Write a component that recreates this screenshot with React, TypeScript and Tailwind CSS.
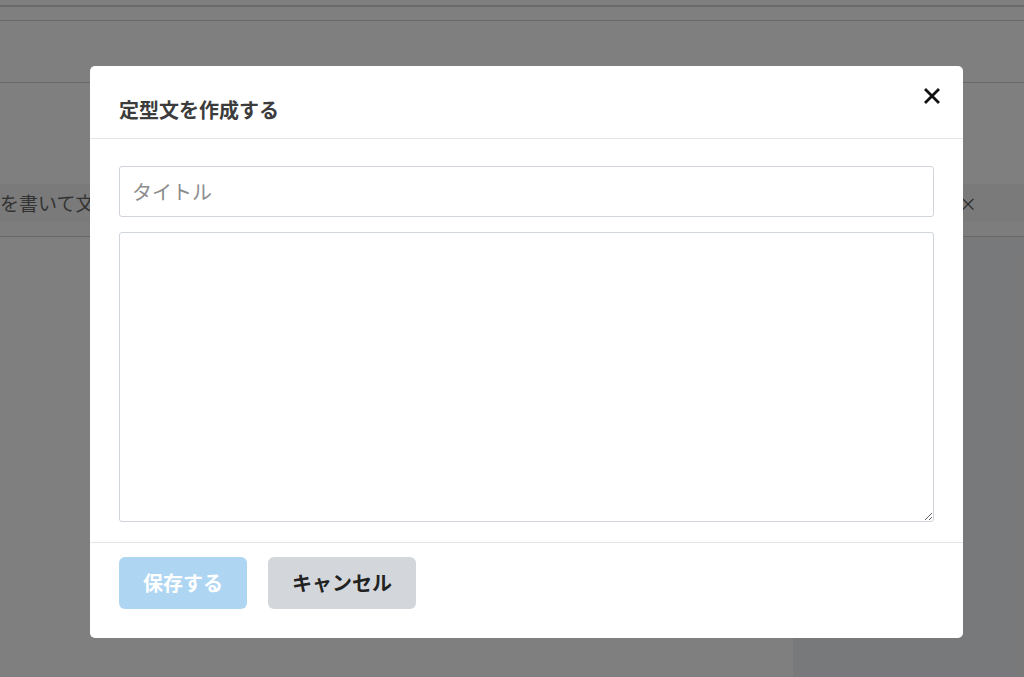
export default function App() {
  const jp = { fontFamily: '"Noto Sans CJK JP", "Noto Sans", sans-serif' };
  return (
    <div className="relative w-[1024px] h-[677px] overflow-hidden bg-white" style={jp}>
      {/* page behind the dialog */}
      <div className="flex flex-col h-full">
        <div className="h-[7px] border-b-2 border-[#d6d6d6]" />
        <div className="h-[14px] border-b border-[#d0d0d0]" />
        <div className="h-[62px] border-b border-[#d0d0d0]" />
        <div className="h-[101px]" />
        <div className="h-[38px] bg-[#f5f5f5] flex items-center justify-between pr-[47px]">
          <span className="text-[19px] text-[#666] whitespace-nowrap">を書いて文</span>
          <span className="text-[18px] text-[#555]">×</span>
        </div>
        <div className="h-[15px] bg-[#fbfbfb] border-b border-[#cfcfcf]" />
        <div className="flex flex-1">
          <div className="flex-1" />
          <div className="w-[231px] bg-[#f1f2f4]" />
        </div>
      </div>

      {/* overlay */}
      <div className="absolute inset-0 bg-black/50 flex justify-start pl-[90px] pt-[66px]">
        <div className="relative w-[873px] h-[572px] bg-white rounded-[5px] flex flex-col">
          <div className="pt-[29px] pb-[14px] px-[29px] border-b border-[#e3e6e9]">
            <h5 className="text-[20px] leading-[29px] font-bold text-[#3c3c3c]">定型文を作成する</h5>
          </div>
          <button className="absolute top-[21px] right-[22px] w-[18px] h-[18px] flex items-center justify-center">
            <svg width="16" height="16" viewBox="0 0 16 16">
              <path d="M2 2 L14 14 M14 2 L2 14" stroke="#111" strokeWidth="2.8" strokeLinecap="square" />
            </svg>
          </button>

          <div className="px-[29px] pt-[27px] pb-[20px] flex flex-col gap-[15px] border-b border-[#e3e6e9]">
            <input
              className="h-[51px] w-full border border-[#cfd5db] rounded-[3px] px-[12px] text-[20px] text-[#333] placeholder:text-[#8c8c8c] outline-none"
              placeholder="タイトル"
              style={jp}
            />
            <textarea
              className="h-[290px] w-full border border-[#cfd5db] rounded-[3px] px-[12px] py-[8px] text-[18px] outline-none"
              style={jp}
            />
          </div>

          <div className="px-[29px] pt-[14px] flex gap-[21px]">
            <button className="h-[52px] px-[24px] rounded-[6px] bg-[#aed6f3] text-white text-[20px] font-bold">
              保存する
            </button>
            <button className="h-[52px] px-[24px] rounded-[6px] bg-[#d3d7db] text-[#222] text-[20px] font-bold">
              キャンセル
            </button>
          </div>
        </div>
      </div>
    </div>
  );
}
